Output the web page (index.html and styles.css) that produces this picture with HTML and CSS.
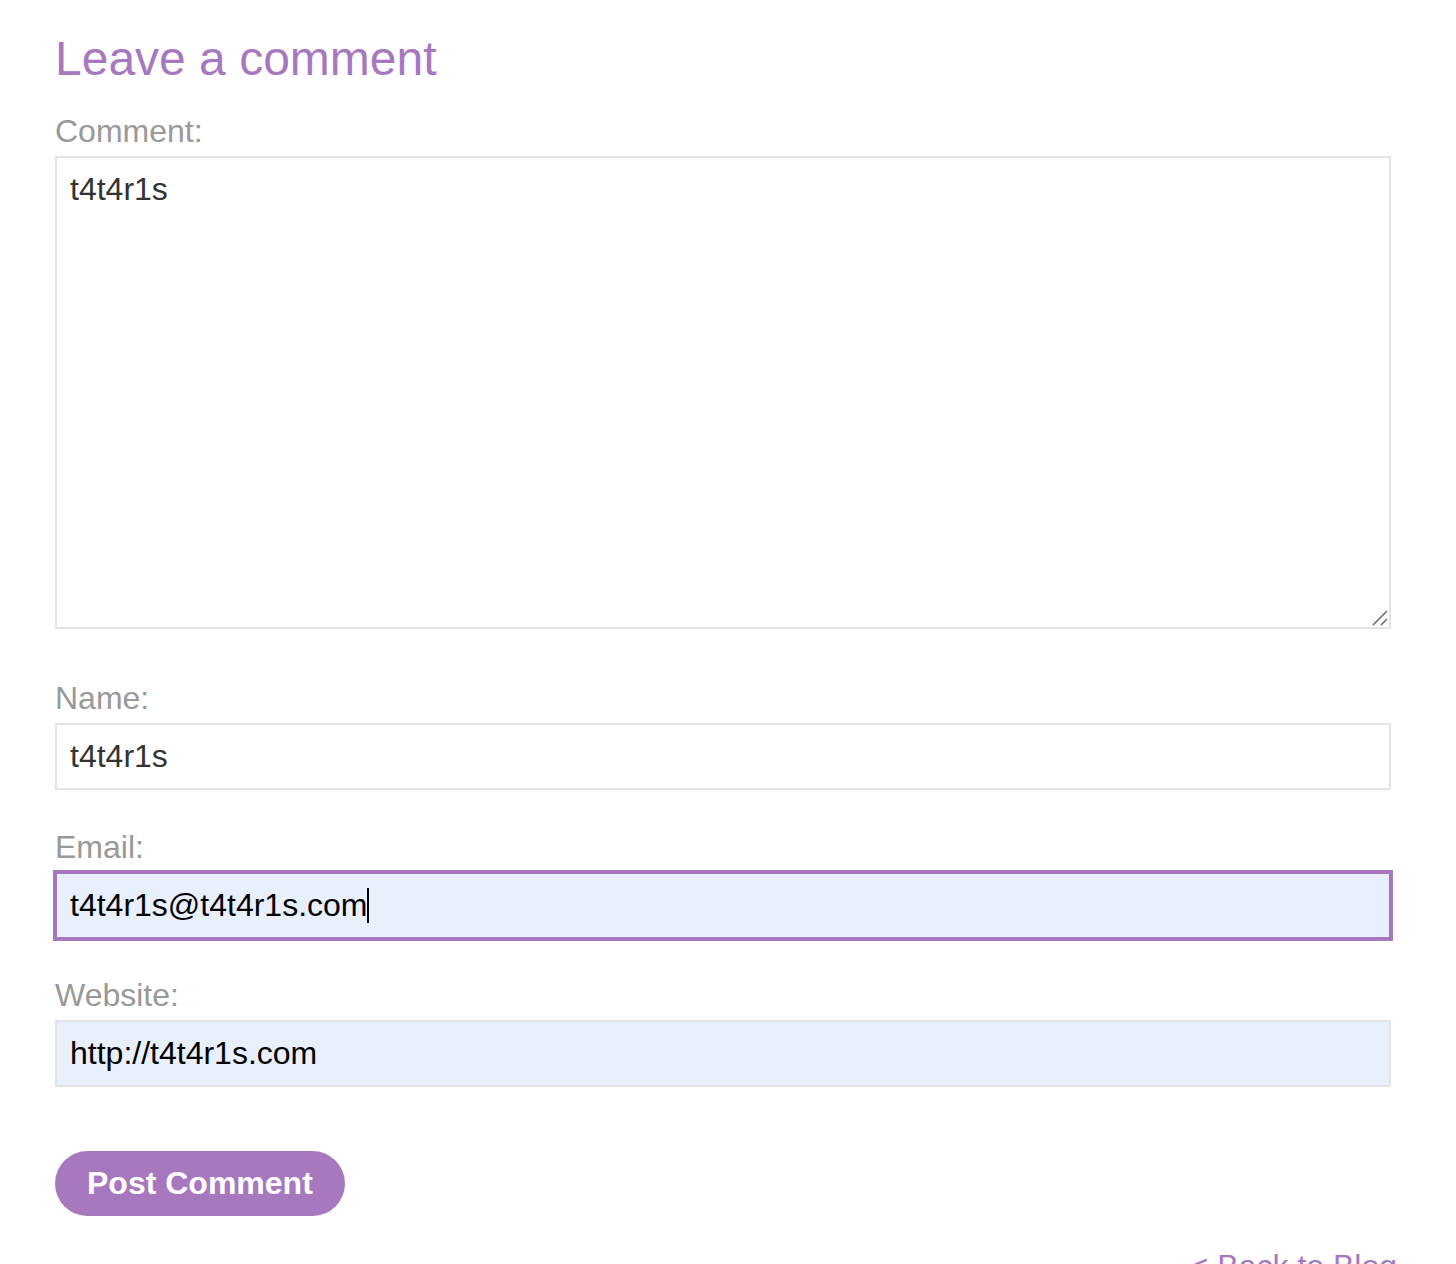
FILE: index.html
```html
<!DOCTYPE html>
<html lang="en">

<head>
    <meta charset="UTF-8">
    <meta name="viewport" content="width=device-width, initial-scale=1.0">
    <title>Leave a comment</title>
    <link rel="stylesheet" href="styles.css">
</head>

<body>
    <section class="comment-form">
        <h2 class="form-title">Leave a comment</h2>
        <form action="/post/comment" method="post">
            <div class="field field-comment">
                <label for="comment">Comment:</label>
                <div class="textarea-wrap">
                    <textarea id="comment" name="comment">t4t4r1s</textarea>
                    <!-- resize grip -->
                    <svg class="grip" width="16" height="16" viewBox="0 0 16 16">
                        <path d="M1 15 L15 1 M9 15 L15 9" stroke="#6b6b6b" stroke-width="1.6" fill="none" />
                    </svg>
                </div>
            </div>
            <div class="field">
                <label for="name">Name:</label>
                <input id="name" name="name" type="text" value="t4t4r1s">
            </div>
            <div class="field">
                <label for="email">Email:</label>
                <div class="input-wrap">
                    <input id="email" name="email" type="email" class="autofilled focused" value="t4t4r1s@t4t4r1s.com">
                    <!-- caret sits right after the typed text -->
                    <div class="caret-layer"><span class="caret-text">t4t4r1s@t4t4r1s.com</span></div>
                </div>
            </div>
            <div class="field">
                <label for="website">Website:</label>
                <input id="website" name="website" type="text" class="autofilled" value="http://t4t4r1s.com">
            </div>
            <button class="button" type="submit">Post Comment</button>
        </form>
        <div class="back-link">
            <a href="/">&lt; Back to Blog</a>
        </div>
    </section>
</body>

</html>
```

FILE: styles.css
```css
body,
html {
    margin: 0;
    padding: 0;
    background-color: #fff;
    font-family: "Liberation Sans", Arial, sans-serif;
    overflow: hidden;
}

.comment-form {
    width: 1336px;
    margin-left: 55px;
    padding-top: 31px;
}

.form-title {
    margin: 0 0 26px;
    font-size: 48px;
    line-height: 56px;
    font-weight: normal;
    color: #a878bf;
}

form {
    margin: 0;
}

.field {
    margin-bottom: 38.5px;
}

.field-comment {
    margin-bottom: 51px;
}

.field label {
    display: block;
    font-size: 32px;
    line-height: 36px;
    color: #999;
    margin-bottom: 7px;
}

textarea,
input {
    display: block;
    box-sizing: border-box;
    width: 100%;
    margin: 0;
    border: 2px solid #e4e4e4;
    border-radius: 0;
    background: #fff;
    font-family: "Liberation Sans", Arial, sans-serif;
    font-size: 32px;
    color: #333;
    outline: none;
}

.textarea-wrap {
    position: relative;
}

textarea {
    height: 473px;
    padding: 13px 13px;
    line-height: normal;
    resize: none;
}

.grip {
    position: absolute;
    right: 3px;
    bottom: 3px;
    pointer-events: none;
}

input {
    height: 67px;
    padding: 0 13px;
}

input.autofilled {
    background-color: #e8f0fe;
    color: #000;
}

input.focused {
    border-color: #a878bf;
    outline: 2px solid #a878bf;
}

.input-wrap {
    position: relative;
}

.caret-layer {
    position: absolute;
    top: 0;
    left: 0;
    height: 67px;
    padding: 0 15px;
    display: flex;
    align-items: center;
    font-size: 32px;
    pointer-events: none;
}

.caret-text {
    color: transparent;
    position: relative;
}

.caret-text::after {
    content: "";
    position: absolute;
    right: -2px;
    top: 1px;
    width: 2px;
    height: 35px;
    background: #000;
}

.button {
    display: inline-block;
    margin-top: 25px;
    height: 65px;
    padding: 0 32px;
    border: none;
    border-radius: 33px;
    background-color: #a878bf;
    color: #fff;
    font-family: "Liberation Sans", Arial, sans-serif;
    font-size: 32px;
    font-weight: bold;
    line-height: 65px;
    cursor: pointer;
}

.back-link {
    margin-top: 32px;
    margin-right: -6px;
    text-align: right;
    font-size: 32px;
    line-height: 36px;
}

.back-link a {
    color: #a878bf;
    text-decoration: none;
}
```
